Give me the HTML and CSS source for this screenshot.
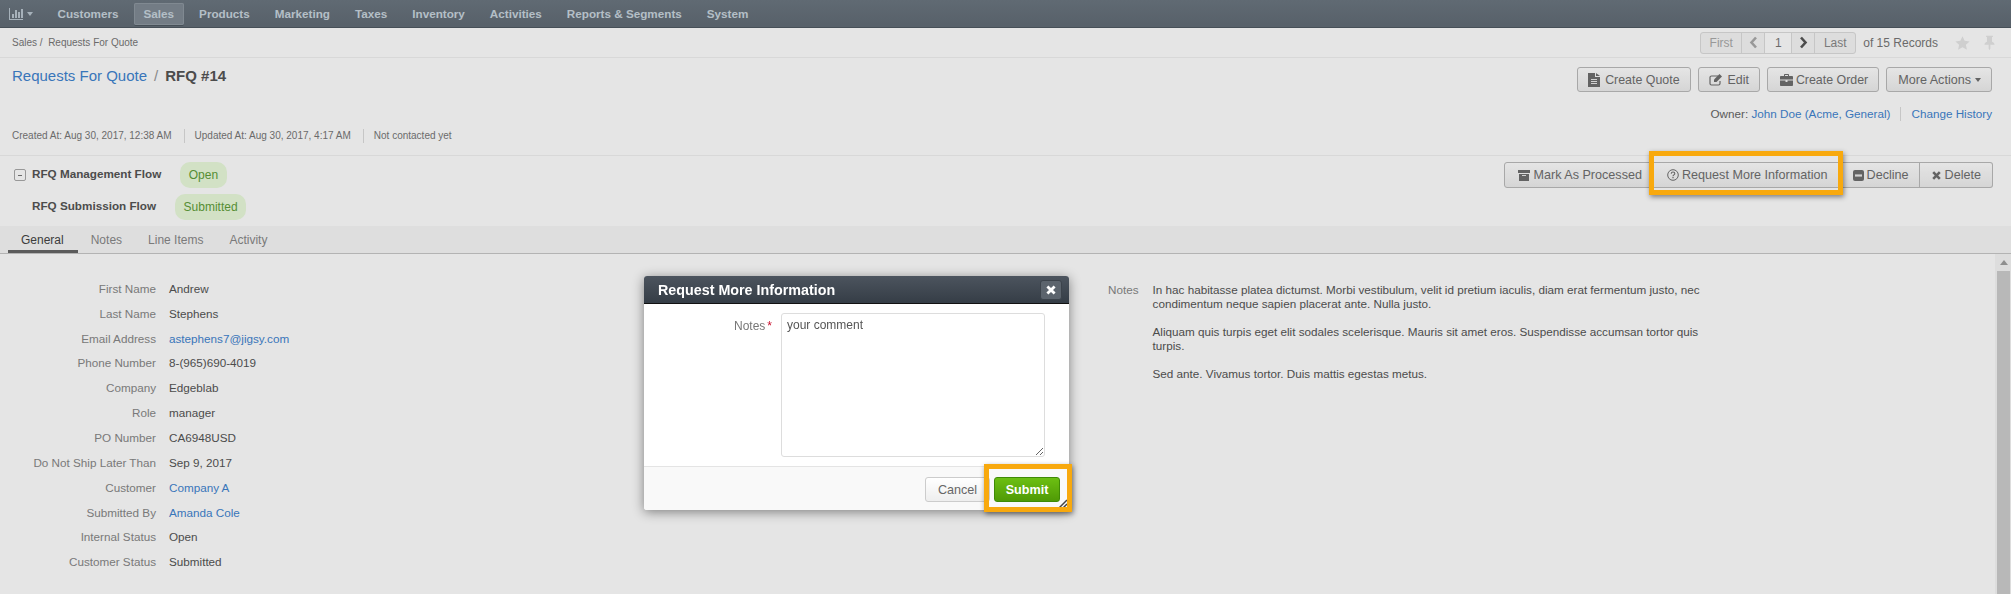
FILE: index.html
```html
<!DOCTYPE html>
<html>
<head>
<meta http-equiv="Content-Type" content="text/html; charset=utf-8"/>
<title>RFQ #14 - Requests For Quote</title>
<link rel="stylesheet" href="styles.css">
</head>
<body>

<nav class="nav">
  <a class="nav-chart">
    <svg width="14" height="12" viewBox="0 0 14 12"><path d="M0 0h1v11h13v1H0z"/><path d="M3 6h2v4H3zM6 2h2v8H6zM9 4h2v6H9zM12 1h2v9h-2z"/></svg>
    <i class="caret"></i>
  </a>
  <a class="nav-item">Customers</a>
  <a class="nav-item active">Sales</a>
  <a class="nav-item">Products</a>
  <a class="nav-item">Marketing</a>
  <a class="nav-item">Taxes</a>
  <a class="nav-item">Inventory</a>
  <a class="nav-item">Activities</a>
  <a class="nav-item">Reports &amp; Segments</a>
  <a class="nav-item">System</a>
</nav>

<div class="crumbs">
  <div>Sales / &nbsp;Requests For Quote</div>
  <div class="pager">
    <div class="pager-group">
      <span class="pg pg-first">First</span>
      <span class="pg pg-arrow"><svg width="9" height="13" viewBox="0 0 9 13"><path d="M7 1.500 2.500 6.500 7 11.500" fill="none" stroke="currentColor" stroke-width="2.600"/></svg></span>
      <span class="pg pg-num">1</span>
      <span class="pg pg-arrow pg-next"><svg width="9" height="13" viewBox="0 0 9 13"><path d="M2 1.500 6.500 6.500 2 11.500" fill="none" stroke="currentColor" stroke-width="2.600"/></svg></span>
      <span class="pg pg-last">Last</span>
    </div>
    <span class="pager-total">of 15 Records</span>
    <svg class="pager-star" width="15" height="14" viewBox="0 0 19 17"><path d="M9.500 0l2.700 5.800 6.300.7-4.700 4.200 1.300 6.300-5.600-3.200L3.900 17l1.300-6.300L.5 6.500l6.300-.7z"/></svg>
    <svg class="pager-pin" width="11" height="16" viewBox="0 0 13 17"><path d="M2.500 0h8v1.500H9.500v5.500c1.700.8 3 2 3 3.500h-5v4.500l-1 2-1-2v-4.500H.5c0-1.500 1.300-2.700 3-3.500V1.500h-1z"/></svg>
  </div>
</div>

<header class="head">
  <div class="head-left">
    <h1 class="title"><a>Requests For Quote</a><span class="title-sep">/</span><b>RFQ #14</b></h1>
    <div class="meta">
      <span>Created At: Aug 30, 2017, 12:38 AM</span>
      <span>Updated At: Aug 30, 2017, 4:17 AM</span>
      <span>Not contacted yet</span>
    </div>
  </div>
  <div class="head-right">
    <div class="actions">
      <a class="btn">
        <svg width="12" height="14" viewBox="0 0 12 14"><path d="M0 0h7v4h5v10H0z"/><path d="M8 0l4 3H8z"/><path d="M3 6.500h6M3 8.500h6M3 10.500h6" stroke="#e9e9e9" stroke-width="1"/></svg>
        Create Quote
      </a>
      <a class="btn">
        <svg width="14" height="13" viewBox="0 0 14 13"><path d="M9 3H2.500A1.500 1.500 0 0 0 1 4.500v6A1.500 1.500 0 0 0 2.500 12h7a1.500 1.500 0 0 0 1.500-1.500V8" fill="none" stroke="currentColor" stroke-width="1.200"/><path d="M5 6.500 10.500 1l2.500 2.500L7.500 9H5z"/></svg>
        Edit
      </a>
      <a class="btn btn-tight">
        <svg width="13" height="12" viewBox="0 0 13 12"><path d="M4 2V.8C4 .3 4.300 0 4.800 0h3.400c.5 0 .8.300.8.800V2h3c.5 0 1 .4 1 1v2.500H0V3c0-.6.500-1 1-1zm1 0h3V1H5zM0 6.500h5.500V8h2V6.500H13V11c0 .6-.5 1-1 1H1c-.5 0-1-.4-1-1z"/></svg>
        Create Order
      </a>
      <a class="btn btn-more">More Actions <i class="caret"></i></a>
    </div>
    <div class="owner">
      <span class="owner-name">Owner: <a>John Doe (Acme, General)</a></span>
      <a class="owner-history">Change History</a>
    </div>
  </div>
</header>

<section class="flows">
  <div class="flow-list">
    <div class="flow-row">
      <span class="flow-toggle"></span>
      <span class="flow-label">RFQ Management Flow</span>
      <span class="badge">Open</span>
    </div>
    <div class="flow-row flow-row-sub">
      <span class="flow-label">RFQ Submission Flow</span>
      <span class="badge">Submitted</span>
    </div>
  </div>
  <div class="btn-group">
    <a class="btn">
      <svg width="12" height="11" viewBox="0 0 12 11"><path d="M0 0h12v3H0zM1 4h10v7H1z"/><path d="M4 5.500h4" stroke="#e9e9e9"/></svg>
      Mark As Processed
    </a>
    <a class="btn">
      <svg width="12" height="12" viewBox="0 0 12 12"><circle cx="6" cy="6" r="5.300" fill="none" stroke="currentColor"/><path d="M4.200 4.700C4.300 3.600 5 3 6 3c1.100 0 1.800.7 1.800 1.500 0 1.400-1.800 1.300-1.800 2.700" fill="none" stroke="currentColor" stroke-width="1.100"/><path d="M5.400 8h1.200v1.200H5.400z"/></svg>
      Request More Information
    </a>
    <a class="btn btn-decline">
      <svg width="11" height="11" viewBox="0 0 11 11"><path d="M2 0h7a2 2 0 0 1 2 2v7a2 2 0 0 1-2 2H2a2 2 0 0 1-2-2V2a2 2 0 0 1 2-2z"/><path d="M2 4.400h7v2.200H2z" fill="#e9e9e9"/></svg>
      Decline
    </a>
    <a class="btn btn-delete">
      <svg width="9" height="9" viewBox="0 0 9 9"><path d="M1.200 1.200l6.600 6.600M7.800 1.200 1.200 7.800" stroke="currentColor" stroke-width="2.600"/></svg>
      Delete
    </a>
  </div>
</section>

<div class="tabs">
  <a class="tab active">General</a>
  <a class="tab">Notes</a>
  <a class="tab">Line Items</a>
  <a class="tab">Activity</a>
</div>

<div class="content">
  <div class="details">
    <dl class="fields">
      <dt>First Name</dt><dd>Andrew</dd>
      <dt>Last Name</dt><dd>Stephens</dd>
      <dt>Email Address</dt><dd><a>astephens7@jigsy.com</a></dd>
      <dt>Phone Number</dt><dd>8-(965)690-4019</dd>
      <dt>Company</dt><dd>Edgeblab</dd>
      <dt>Role</dt><dd>manager</dd>
      <dt>PO Number</dt><dd>CA6948USD</dd>
      <dt>Do Not Ship Later Than</dt><dd>Sep 9, 2017</dd>
      <dt>Customer</dt><dd><a>Company A</a></dd>
      <dt>Submitted By</dt><dd><a>Amanda Cole</a></dd>
      <dt>Internal Status</dt><dd>Open</dd>
      <dt>Customer Status</dt><dd>Submitted</dd>
    </dl>
    <div class="notes">
      <div class="notes-label">Notes</div>
      <div class="notes-text">
        <p>In hac habitasse platea dictumst. Morbi vestibulum, velit id pretium iaculis, diam erat fermentum justo, nec condimentum neque sapien placerat ante. Nulla justo.</p>
        <p>Aliquam quis turpis eget elit sodales scelerisque. Mauris sit amet eros. Suspendisse accumsan tortor quis turpis.</p>
        <p>Sed ante. Vivamus tortor. Duis mattis egestas metus.</p>
      </div>
    </div>
  </div>
  <div class="scrollbar">
    <div class="scroll-up"><i></i></div>
    <div class="scroll-thumb"></div>
  </div>
</div>

<div class="overlay"></div>

<div class="highlight hl-request"></div>

<div class="modal">
  <div class="modal-head">
    <span>Request More Information</span>
    <a class="modal-close"><svg width="10" height="10" viewBox="0 0 10 10"><path d="M1.400 1.400l7.200 7.200M8.600 1.400 1.400 8.600" stroke="#fff" stroke-width="2.800"/></svg></a>
  </div>
  <div class="modal-body">
    <label class="modal-label">Notes<em>*</em></label>
    <textarea class="modal-text">your comment</textarea>
  </div>
  <div class="modal-foot">
    <a class="btn btn-cancel">Cancel</a>
    <a class="btn btn-submit">Submit</a>
  </div>
  <svg class="modal-grip" width="10" height="10" viewBox="0 0 10 10"><path d="M1 9 9 1M5 9 9 5" stroke="#444" stroke-width="1.500"/></svg>
</div>

<div class="highlight hl-submit"></div>

</body>
</html>
```

FILE: styles.css
```css
html, body {
  margin: 0;
  height: 594px;
  overflow: hidden;
}

body {
  font-family: "Liberation Sans", Arial, sans-serif;
  font-size: 11.7px;
  line-height: 14px;
  color: #555;
  background-color: #fff;
}

a {
  color: #3f84d0;
  text-decoration: none;
}

.caret {
  display: inline-block;
  border-top: 4px solid currentColor;
  border-left: 3px solid transparent;
  border-right: 3px solid transparent;
  vertical-align: middle;
}

/* top menu */
.nav {
  display: flex;
  align-items: center;
  gap: 5px;
  height: 28px;
  padding-left: 9px;
  background: linear-gradient(#6b7680, #626c76);
  border-bottom: 1px solid #4f5861;
  box-sizing: border-box;
}

.nav-chart {
  display: flex;
  align-items: center;
  gap: 4px;
  width: 33.500px;
  color: #b9c6d0;
  fill: #b9c6d0;
}

.nav-item {
  padding: 0 10px;
  font-weight: bold;
  line-height: 22px;
  color: #c9d5de;
  border-radius: 2px;
}

.nav-item.active {
  background: #808b95;
  box-shadow: inset 0 0 0 1px #8f99a2, 0 1px 0 #4f5861;
}

/* breadcrumbs + pager */
.crumbs {
  display: flex;
  justify-content: space-between;
  align-items: center;
  height: 30px;
  padding: 0 16px 0 12px;
  font-size: 10px;
  color: #777;
  border-bottom: 1px solid #f1f1f1;
  box-sizing: border-box;
}

.pager {
  display: flex;
  align-items: center;
  font-size: 12px;
}

.pager-group {
  display: flex;
  height: 22px;
  border: 1px solid #ddd;
  border-radius: 3px;
  background: #f6f6f6;
  box-sizing: border-box;
}

.pg {
  display: flex;
  align-items: center;
  justify-content: center;
  border-left: 1px solid #ddd;
  color: #888;
}

.pg-first {
  width: 40px;
  border-left: 0;
  color: #aaa;
}

.pg-arrow {
  width: 22px;
  color: #aaa;
}

.pg-next {
  color: #555;
}

.pg-num {
  width: 26px;
  background: #fff;
  color: #777;
}

.pg-last {
  width: 40px;
}

.pager-total {
  margin-left: 7px;
  color: #777;
}

.pager-star {
  margin-left: 17px;
  fill: #e7e7e7;
}

.pager-pin {
  margin-left: 14px;
  fill: #e7e7e7;
}

/* page title */
.head {
  display: flex;
  justify-content: space-between;
  height: 98px;
  padding: 9px 19px 12px 12px;
  border-bottom: 1px solid #f1f1f1;
  box-sizing: border-box;
}

.head-left {
  display: flex;
  flex-direction: column;
  justify-content: space-between;
}

.title {
  margin: 0;
  font-size: 15px;
  font-weight: normal;
  line-height: 18px;
}

.title b {
  color: #555;
}

.title-sep {
  margin: 0 7px;
  color: #999;
}

.meta {
  display: flex;
  font-size: 10px;
  color: #777;
}

.meta span {
  padding-right: 12px;
  margin-right: 10px;
  border-right: 1px solid #ddd;
}

.meta span:last-child {
  border: 0;
}

.head-right {
  display: flex;
  flex-direction: column;
  align-items: flex-end;
}

.actions {
  display: flex;
  gap: 7px;
}

.btn {
  display: flex;
  align-items: center;
  gap: 5px;
  height: 25px;
  padding: 0 10px;
  color: #6f6f6f;
  fill: #6f6f6f;
  font-size: 12.4px;
  background: linear-gradient(#fff, #eee);
  border: 1px solid #bbb;
  border-radius: 3px;
  box-sizing: border-box;
  white-space: nowrap;
}

.btn-tight {
  gap: 3px;
  padding-left: 12px;
}

.btn-more {
  gap: 4px;
  padding-left: 11px;
  font-size: 12.6px;
}

.owner {
  display: flex;
  align-items: center;
  margin-top: 15px;
  color: #666;
}

.owner-name {
  padding-right: 10px;
  margin-right: 10px;
  border-right: 1px solid #ddd;
}

/* workflow row */
.flows {
  display: flex;
  justify-content: space-between;
  height: 70px;
  padding: 6px 18px 0 14px;
  box-sizing: border-box;
}

.flow-list {
  display: flex;
  flex-direction: column;
  gap: 6px;
}

.flow-row {
  display: flex;
  align-items: center;
  height: 26px;
}

.flow-row-sub {
  padding-left: 18px;
  height: 25px;
}

.flow-toggle {
  position: relative;
  width: 10px;
  height: 10px;
  margin-right: 6px;
  border: 1px solid #aaa;
  border-radius: 2px;
}

.flow-toggle::after {
  content: "";
  position: absolute;
  left: 3px;
  top: 5px;
  width: 4px;
  height: 1px;
  background: #777;
}

.flow-label {
  font-weight: bold;
  margin-right: 19px;
  margin-top: -2px;
}

.badge {
  padding: 0 8.500px;
  line-height: 26px;
  font-size: 12px;
  color: #5f9e3a;
  background: #eafbdc;
  border-radius: 10px;
}

.btn-group {
  display: flex;
  height: 26px;
}

.btn-group .btn {
  height: 26px;
  gap: 3px;
  padding: 0 11px 0 13px;
  font-size: 12.6px;
  border-radius: 0;
  border-left-width: 0;
}

.btn-group .btn:first-child {
  border-left-width: 1px;
  border-radius: 3px 0 0 3px;
}

.btn-group .btn:last-child {
  border-radius: 0 3px 3px 0;
}

.btn-group .btn-decline {
  padding-right: 10px;
}

.btn-group .btn-delete {
  gap: 4px;
  padding-left: 12px;
}

/* tabs */
.tabs {
  display: flex;
  height: 28px;
  padding-left: 8px;
  background: #f8f8f8;
  border-bottom: 1px solid #c8c8c8;
  box-sizing: border-box;
}

.tab {
  height: 27px;
  padding: 7px 13px 0;
  font-size: 12px;
  color: #888;
  box-sizing: border-box;
}

.tab.active {
  padding-right: 14px;
  color: #444;
  border-bottom: 3px solid #666;
}

/* details */
.content {
  display: flex;
  justify-content: space-between;
  height: 341px;
}

.details {
  display: flex;
  padding-top: 22.500px;
}

.fields {
  display: grid;
  grid-template-columns: 156px auto;
  grid-auto-rows: 24.85px;
  column-gap: 13px;
  align-items: center;
  align-content: start;
  width: 982px;
  margin: 0;
}

.fields dt {
  text-align: right;
  color: #888;
}

.fields dd {
  margin: 0;
}

.notes {
  display: flex;
  gap: 14px;
  margin-left: 126px;
  padding-top: 6px;
}

.notes-label {
  color: #888;
}

.notes-text {
  width: 558px;
}

.notes-text p {
  margin: 0 0 14px;
}

.scrollbar {
  width: 16px;
  padding: 0 1px 0 2px;
  background: #f6f6f6;
  box-sizing: border-box;
}

.scroll-up {
  display: flex;
  justify-content: center;
  height: 17px;
  padding-top: 6px;
  box-sizing: border-box;
}

.scroll-up i {
  width: 0;
  height: 0;
  border-bottom: 5px solid #a0a0a0;
  border-left: 4px solid transparent;
  border-right: 4px solid transparent;
}

.scroll-thumb {
  height: 324px;
  background: #cdcdcd;
}

/* dim + dialog */
.overlay {
  position: fixed;
  inset: 0;
  background: rgba(0, 0, 0, .1);
}

.highlight {
  position: absolute;
  border: 5px solid #f8a90e;
  box-sizing: border-box;
  box-shadow: 1px 2px 5px rgba(0, 0, 0, .45);
}

.hl-request {
  left: 1649px;
  top: 151px;
  width: 194px;
  height: 44px;
}

.hl-submit {
  left: 984px;
  top: 464px;
  width: 88px;
  height: 48px;
}

.modal {
  position: absolute;
  left: 644px;
  top: 276px;
  width: 425px;
  height: 234px;
  display: flex;
  flex-direction: column;
  background: #fff;
  border-radius: 3px;
  box-shadow: 0 2px 12px rgba(0, 0, 0, .45);
}

.modal-head {
  display: flex;
  justify-content: space-between;
  align-items: center;
  height: 28px;
  padding: 0 7px 0 14px;
  font-size: 14.3px;
  font-weight: bold;
  color: #fff;
  background: linear-gradient(#4c545e, #353d46);
  border-bottom: 1px solid #111;
  border-radius: 3px 3px 0 0;
  box-sizing: border-box;
}

.modal-close {
  display: flex;
  align-items: center;
  justify-content: center;
  width: 22px;
  height: 20px;
  background: #5c646d;
  border: 1px solid #3c434b;
  border-radius: 3px;
  box-sizing: border-box;
}

.modal-body {
  display: flex;
  flex: 1;
  padding-top: 9px;
}

.modal-label {
  width: 128px;
  padding-top: 6px;
  font-size: 12px;
  text-align: right;
  color: #777;
}

.modal-label em {
  margin-left: 2px;
  color: #c8102e;
  font-style: normal;
}

.modal-text {
  width: 264px;
  height: 144px;
  margin-left: 9px;
  padding: 4px 5px;
  font: 12px/14px "Liberation Sans", Arial, sans-serif;
  color: #555;
  border: 1px solid #ddd;
  border-radius: 3px;
  box-sizing: border-box;
}

.modal-foot {
  display: flex;
  justify-content: flex-end;
  gap: 4px;
  height: 44px;
  padding: 10px 9px 0 0;
  background: #f9f9f9;
  border-top: 1px solid #e4e4e4;
  border-radius: 0 0 3px 3px;
  box-sizing: border-box;
}

.btn-cancel {
  width: 65px;
  justify-content: center;
  padding: 0;
  font-size: 12.6px;
  color: #666;
  border-color: #ccc;
}

.btn-submit {
  width: 66px;
  justify-content: center;
  padding: 0;
  font-size: 12.6px;
  font-weight: bold;
  color: #fff;
  background: linear-gradient(#6cbf12, #4f9a06);
  border-color: #3f8a05;
}

.modal-grip {
  position: absolute;
  right: 1px;
  bottom: 1px;
}
```
